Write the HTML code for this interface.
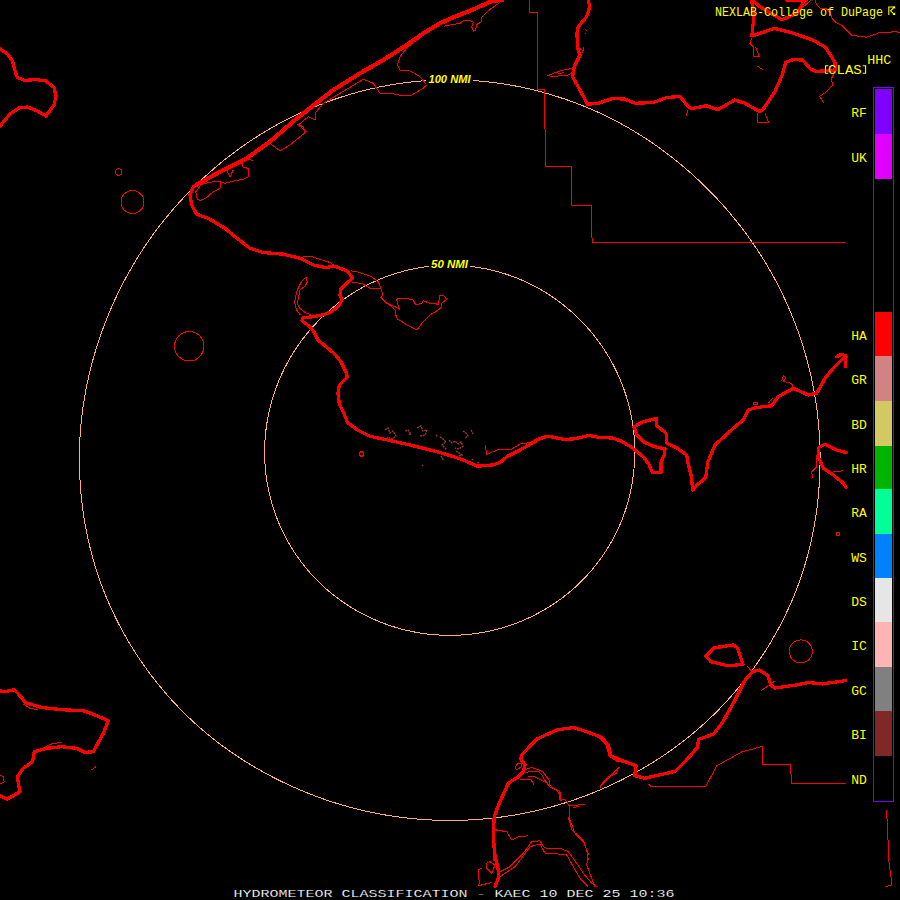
<!DOCTYPE html>
<html><head><meta charset="utf-8"><title>Hydrometeor Classification</title>
<style>html,body{margin:0;padding:0;background:#000;width:900px;height:900px;overflow:hidden}svg{display:block}</style>
</head><body>
<svg width="900" height="900" viewBox="0 0 900 900">
<style>.b{fill:none;stroke:#ff0000;stroke-width:4.2;stroke-linejoin:round;stroke-linecap:round;shape-rendering:crispEdges}.k{fill:none;stroke:#ff0000;stroke-width:3.3;stroke-linejoin:round;stroke-linecap:round;shape-rendering:crispEdges}.s{fill:none;stroke:#ff0000;stroke-width:1;stroke-linejoin:round;shape-rendering:crispEdges}.r{fill:none;stroke:#ffac80;stroke-width:1;shape-rendering:crispEdges}</style>
<polygon class="r" points="820.00,450.25 820.08,456.71 820.06,463.18 819.93,469.65 819.70,476.12 819.36,482.59 818.91,489.05 818.36,495.51 817.69,501.96 816.91,508.40 816.02,514.83 815.01,521.25 813.89,527.65 812.65,534.03 811.30,540.39 809.83,546.73 808.24,553.05 806.53,559.33 804.71,565.58 802.76,571.80 800.69,577.98 798.51,584.13 796.20,590.23 793.78,596.28 791.23,602.29 788.58,608.25 785.81,614.16 782.94,620.02 779.95,625.82 776.85,631.57 773.65,637.26 770.35,642.88 766.94,648.45 763.43,653.95 759.82,659.39 756.10,664.76 752.30,670.06 748.39,675.29 744.40,680.45 740.31,685.54 736.13,690.55 731.86,695.48 727.50,700.34 723.06,705.11 718.53,709.81 713.93,714.43 709.23,718.95 704.46,723.39 699.60,727.74 694.66,731.99 689.65,736.15 684.56,740.21 679.40,744.18 674.16,748.06 668.87,751.84 663.50,755.52 658.07,759.10 652.59,762.59 647.04,765.98 641.44,769.27 635.78,772.46 630.07,775.56 624.31,778.55 618.51,781.45 612.65,784.25 606.76,786.96 600.82,789.56 594.84,792.07 588.83,794.48 582.77,796.78 576.68,798.98 570.55,801.08 564.39,803.06 558.19,804.95 551.97,806.72 545.71,808.39 539.43,809.95 533.13,811.40 526.80,812.74 520.45,813.98 514.08,815.11 507.70,816.13 501.30,817.04 494.88,817.84 488.46,818.54 482.02,819.13 475.58,819.61 469.13,819.98 462.67,820.24 456.21,820.40 449.75,820.45 443.29,820.39 436.83,820.22 430.37,819.95 423.92,819.57 417.48,819.08 411.05,818.48 404.62,817.77 398.21,816.95 391.82,816.03 385.44,815.00 379.07,813.86 372.73,812.61 366.40,811.26 360.10,809.80 353.83,808.23 347.58,806.55 341.36,804.77 335.17,802.89 329.01,800.90 322.89,798.80 316.80,796.60 310.75,794.29 304.73,791.89 298.76,789.38 292.82,786.78 286.93,784.09 281.07,781.29 275.27,778.40 269.51,775.42 263.79,772.33 258.13,769.15 252.53,765.87 246.97,762.50 241.48,759.02 236.05,755.45 230.68,751.78 225.37,748.01 220.13,744.15 214.96,740.19 209.87,736.13 204.85,731.98 199.91,727.73 195.05,723.39 190.27,718.95 185.57,714.43 180.97,709.81 176.44,705.11 172.01,700.33 167.66,695.47 163.39,690.53 159.22,685.52 155.14,680.42 151.15,675.26 147.26,670.02 143.46,664.71 139.76,659.34 136.17,653.89 132.67,648.39 129.27,642.81 125.98,637.18 122.79,631.49 119.70,625.74 116.72,619.93 113.86,614.08 111.10,608.17 108.45,602.21 105.91,596.20 103.48,590.15 101.17,584.06 98.99,577.92 96.91,571.74 94.96,565.53 93.12,559.28 91.41,553.00 89.80,546.70 88.32,540.36 86.95,534.01 85.70,527.63 84.57,521.23 83.55,514.82 82.64,508.39 81.85,501.96 81.17,495.51 80.60,489.05 80.14,482.59 79.80,476.12 79.56,469.65 79.43,463.18 79.41,456.71 79.50,450.25 79.70,443.79 80.01,437.34 80.45,430.90 80.99,424.46 81.65,418.05 82.43,411.64 83.31,405.26 84.31,398.89 85.41,392.54 86.63,386.22 87.95,379.92 89.38,373.65 90.91,367.41 92.55,361.19 94.29,355.01 96.13,348.85 98.08,342.73 100.12,336.65 102.26,330.60 104.50,324.59 106.83,318.61 109.25,312.68 111.77,306.79 114.39,300.94 117.10,295.13 119.90,289.37 122.80,283.66 125.79,278.00 128.88,272.39 132.06,266.83 135.33,261.32 138.68,255.87 142.13,250.48 145.67,245.15 149.30,239.87 153.01,234.66 156.82,229.51 160.70,224.42 164.68,219.40 168.73,214.45 172.87,209.56 177.09,204.75 181.40,200.01 185.78,195.34 190.24,190.74 194.78,186.22 199.39,181.77 204.07,177.40 208.83,173.10 213.65,168.88 218.54,164.74 223.51,160.67 228.54,156.70 233.64,152.80 238.81,148.99 244.04,145.27 249.34,141.64 254.70,138.10 260.12,134.66 265.61,131.30 271.15,128.05 276.75,124.89 282.41,121.83 288.13,118.87 293.89,116.01 299.71,113.26 305.59,110.62 311.51,108.08 317.47,105.65 323.47,103.31 329.52,101.08 335.61,98.95 341.73,96.93 347.89,95.01 354.08,93.20 360.30,91.50 366.56,89.92 372.84,88.44 379.16,87.07 385.49,85.82 391.85,84.68 398.23,83.66 404.63,82.75 411.04,81.96 417.47,81.29 423.91,80.74 430.36,80.31 436.82,80.00 443.28,79.82 449.75,79.75 456.22,79.81 462.68,79.99 469.14,80.28 475.59,80.70 482.03,81.24 488.46,81.90 494.88,82.68 501.28,83.58 507.67,84.59 514.03,85.72 520.37,86.96 526.68,88.31 532.97,89.78 539.23,91.36 545.46,93.05 551.66,94.86 557.82,96.76 563.95,98.78 570.04,100.90 576.09,103.13 582.10,105.46 588.07,107.90 593.99,110.44 599.87,113.08 605.69,115.83 611.46,118.69 617.18,121.66 622.84,124.72 628.44,127.89 633.98,131.15 639.46,134.52 644.88,137.97 650.24,141.52 655.53,145.16 660.76,148.89 665.93,152.71 671.03,156.61 676.06,160.59 681.02,164.66 685.91,168.80 690.73,173.03 695.49,177.33 700.17,181.70 704.79,186.15 709.33,190.67 713.80,195.26 718.19,199.92 722.51,204.66 726.74,209.46 730.90,214.34 734.97,219.28 738.97,224.29 742.88,229.36 746.70,234.50 750.44,239.70 754.09,244.97 757.65,250.29 761.13,255.68 764.51,261.12 767.80,266.62 771.00,272.18 774.11,277.79 777.12,283.45 780.03,289.16 782.85,294.92 785.57,300.73 788.19,306.59 790.71,312.49 793.13,318.44 795.46,324.42 797.68,330.45 799.81,336.51 801.83,342.61 803.75,348.74 805.57,354.91 807.29,361.11 808.90,367.33 810.40,373.59 811.80,379.87 813.09,386.18 814.28,392.51 815.35,398.87 816.32,405.24 817.18,411.63 817.93,418.04 818.57,424.46 819.09,430.89 819.51,437.34 819.81,443.79"/>
<polygon class="r" points="634.75,450.30 634.75,453.53 634.69,456.76 634.58,459.99 634.42,463.22 634.20,466.44 633.92,469.66 633.59,472.88 633.21,476.09 632.77,479.29 632.27,482.49 631.71,485.68 631.10,488.86 630.44,492.03 629.71,495.18 628.93,498.33 628.10,501.45 627.21,504.57 626.26,507.67 625.25,510.75 624.19,513.81 623.08,516.85 621.91,519.88 620.68,522.88 619.40,525.86 618.07,528.81 616.68,531.74 615.24,534.65 613.75,537.53 612.20,540.38 610.61,543.20 608.97,546.00 607.27,548.76 605.53,551.50 603.74,554.20 601.90,556.87 600.01,559.51 598.08,562.11 596.10,564.68 594.07,567.21 592.01,569.71 589.89,572.17 587.74,574.59 585.54,576.97 583.30,579.32 581.02,581.62 578.70,583.89 576.34,586.11 573.94,588.29 571.50,590.42 569.03,592.51 566.52,594.56 563.97,596.56 561.38,598.51 558.77,600.42 556.12,602.28 553.44,604.09 550.72,605.86 547.98,607.58 545.21,609.25 542.41,610.87 539.58,612.44 536.72,613.97 533.84,615.44 530.94,616.87 528.01,618.24 525.06,619.57 522.09,620.84 519.10,622.06 516.08,623.23 513.05,624.35 510.00,625.42 506.93,626.43 503.84,627.39 500.74,628.29 497.62,629.15 494.49,629.94 491.35,630.68 488.19,631.37 485.02,632.01 481.84,632.59 478.65,633.11 475.46,633.58 472.25,633.99 469.04,634.35 465.83,634.65 462.61,634.90 459.38,635.09 456.16,635.23 452.93,635.31 449.70,635.34 446.47,635.31 443.24,635.23 440.02,635.09 436.79,634.89 433.57,634.64 430.36,634.34 427.15,633.98 423.94,633.56 420.75,633.09 417.56,632.56 414.38,631.98 411.22,631.35 408.06,630.66 404.92,629.91 401.79,629.11 398.67,628.26 395.57,627.35 392.48,626.39 389.41,625.38 386.36,624.32 383.33,623.20 380.32,622.03 377.33,620.80 374.35,619.53 371.40,618.21 368.48,616.83 365.57,615.41 362.69,613.94 359.84,612.42 357.01,610.85 354.21,609.23 351.43,607.56 348.69,605.84 345.98,604.08 343.29,602.27 340.64,600.41 338.02,598.50 335.44,596.55 332.89,594.55 330.37,592.51 327.90,590.42 325.46,588.28 323.06,586.11 320.70,583.89 318.38,581.62 316.10,579.32 313.86,576.97 311.66,574.59 309.51,572.17 307.40,569.71 305.33,567.21 303.31,564.67 301.33,562.10 299.40,559.50 297.52,556.86 295.68,554.19 293.89,551.48 292.15,548.75 290.46,545.98 288.82,543.19 287.22,540.36 285.68,537.51 284.19,534.63 282.75,531.72 281.37,528.79 280.04,525.84 278.76,522.86 277.53,519.86 276.36,516.84 275.24,513.80 274.18,510.74 273.17,507.66 272.22,504.56 271.33,501.45 270.49,498.32 269.71,495.18 268.99,492.02 268.32,488.85 267.70,485.68 267.15,482.49 266.64,479.29 266.20,476.09 265.81,472.88 265.48,469.66 265.20,466.44 264.98,463.22 264.81,459.99 264.70,456.76 264.65,453.53 264.65,450.30 264.71,447.07 264.82,443.84 264.99,440.62 265.22,437.40 265.50,434.18 265.84,430.98 266.24,427.77 266.69,424.58 267.20,421.39 267.76,418.22 268.38,415.05 269.05,411.90 269.78,408.76 270.56,405.63 271.39,402.52 272.28,399.42 273.22,396.34 274.21,393.28 275.25,390.23 276.34,387.20 277.49,384.19 278.68,381.20 279.93,378.24 281.22,375.29 282.57,372.37 283.96,369.47 285.41,366.59 286.90,363.74 288.44,360.91 290.03,358.12 291.67,355.35 293.35,352.60 295.08,349.89 296.86,347.21 298.68,344.56 300.55,341.94 302.46,339.35 304.42,336.80 306.42,334.28 308.47,331.79 310.55,329.34 312.68,326.93 314.85,324.55 317.06,322.21 319.31,319.91 321.60,317.65 323.93,315.42 326.29,313.24 328.69,311.10 331.13,308.99 333.60,306.93 336.11,304.92 338.66,302.94 341.23,301.01 343.84,299.12 346.49,297.28 349.16,295.49 351.87,293.74 354.61,292.04 357.37,290.38 360.17,288.78 362.99,287.22 365.84,285.71 368.72,284.26 371.62,282.85 374.55,281.50 377.50,280.20 380.47,278.95 383.46,277.75 386.48,276.61 389.52,275.51 392.57,274.47 395.64,273.49 398.73,272.55 401.84,271.67 404.96,270.85 408.09,270.08 411.24,269.36 414.40,268.70 417.57,268.10 420.76,267.55 423.95,267.06 427.15,266.63 430.36,266.25 433.57,265.93 436.79,265.67 440.01,265.46 443.24,265.32 446.47,265.23 449.70,265.20 452.93,265.23 456.16,265.31 459.39,265.46 462.61,265.66 465.83,265.92 469.05,266.24 472.25,266.61 475.45,267.05 478.65,267.53 481.83,268.08 485.00,268.68 488.16,269.34 491.31,270.05 494.45,270.82 497.57,271.64 500.68,272.52 503.77,273.45 506.84,274.44 509.90,275.48 512.93,276.57 515.95,277.72 518.95,278.91 521.92,280.16 524.87,281.46 527.80,282.82 530.70,284.22 533.58,285.68 536.43,287.19 539.25,288.75 542.05,290.35 544.81,292.01 547.55,293.71 550.25,295.46 552.93,297.26 555.57,299.10 558.18,300.99 560.76,302.92 563.30,304.90 565.81,306.92 568.28,308.98 570.72,311.08 573.12,313.23 575.49,315.41 577.81,317.63 580.10,319.90 582.36,322.20 584.57,324.53 586.74,326.91 588.87,329.32 590.96,331.77 593.01,334.25 595.01,336.77 596.97,339.32 598.89,341.91 600.76,344.52 602.59,347.17 604.37,349.85 606.11,352.56 607.80,355.31 609.44,358.07 611.03,360.87 612.58,363.70 614.08,366.55 615.52,369.42 616.92,372.32 618.27,375.25 619.56,378.20 620.81,381.17 622.00,384.16 623.15,387.17 624.24,390.20 625.28,393.25 626.27,396.32 627.20,399.40 628.08,402.50 628.91,405.62 629.68,408.75 630.40,411.89 631.07,415.05 631.68,418.21 632.24,421.39 632.74,424.58 633.19,427.77 633.58,430.97 633.91,434.18 634.19,437.40 634.42,440.62 634.58,443.84 634.70,447.07"/>
<polyline class="s" points="529.5,0 529.5,12.5 537.5,12.5 537.5,89.5 544.5,89.5 545.5,166.5 571.3,166.5 571.3,205.5 591.5,205.5 591.5,238 592.5,238 592.5,242.5 846,242.5"/>
<polyline class="s" points="648.6,783.9 651.4,786.7 705.6,786.7 716.7,765.8 741.7,751.9 762.5,746.4 762.5,764.4 790.3,764.4 791.7,783.3 846,783.3"/>
<polyline class="s" points="886.6,810 888,840 889,862 891,877 891,885 885,887"/>
<polyline class="s" points="196.7,198.3 195.8,191.7 201.7,184.2 213.3,181.7 220,181.7 220,188.3 213.3,191.7 206.7,197.5 200,200.8 196.7,198.3"/>
<polyline class="s" points="220,181.7 225,183.3 235,180.8 243.3,179.2 248.3,176.7 248.3,168.3 243.3,167.5 241.7,162.5 248.3,159.2 253.3,160.8"/>
<polyline class="s" points="226.7,170 230,176.7 233.3,170"/>
<polyline class="s" points="270,143.3 280,150.8 290,145 300,136.7 306.7,131.7 298.3,125 308.3,116.7 315,120 315,113.3 323.3,103.3 340,93.3 356.7,83.3 363.3,79.2 373.3,83.3 380,93.3 390,93.3 403.3,95.8 411.7,95 423.3,88.3 426.7,85 420,76.7 410,70.8 400,70 397.5,65 400,56.7 406.7,48.3 413.3,42.5 420,38"/>
<polyline class="s" points="444.4,26.1 460,23.3 463.3,20.6 470,20.6 473.3,22.2 471.7,26.7 473.3,31.1 475.6,30 476.7,24.4 481.1,22.2 481.1,17.8 486.7,12.2 492.2,7.8 498.9,3.3 502.2,0"/>
<polyline class="s" points="350.8,270.8 356.7,271.7 370,275.8 378.3,281.7 380.8,288.3 383,295 380.8,297.5 386.7,303.3 391,306 395,310 395,313 397.5,319 403.3,322.5 408.3,325.8 416.7,330 423.3,321.7 430,315 436.7,310.8 440.8,308.3 441.7,303.3 446.7,299.2 443.3,295 440,295 438.3,304.2 430,303.3 423.3,300.8 421.7,303.3 415.8,305 413.3,300 406.7,298.3 398.3,298.3 396.7,300 399.2,309.2 395,306.7 386.7,303.3"/>
<polyline class="s" points="351.7,282.5 361.7,283.3 370,288.3 380,289"/>
<polyline class="s" points="300.7,315.3 296.7,310 294.7,303.3 295.3,298 297.3,290 301.3,282 306,277.3 307.3,282 305.3,286 300,290 298.7,296.7 297.3,303.3 300,308.7 305.3,312.7 312,315.3"/>
<polyline class="s" points="300,257.5 310,256 330,262.5 335,266"/>
<polyline class="s" points="486,455 492,452 500,449 512,449 520,444 530,442.5 540,437"/>
<polyline class="s" points="485,445 487,455"/>
<polyline class="s" points="751.8,37.8 749.9,43.4 753.7,47.2 753.7,56.7 759.3,56.7 755.6,47.2"/>
<polyline class="s" points="757.4,66.1 763.1,69.9"/>
<polyline class="s" points="834.9,71.8 831.1,79.3 833,85 825.4,92.6 819.8,96.3 823.6,102.9"/>
<polyline class="s" points="757.4,113.3 757.4,122.8 768.8,122.8 765,113.3"/>
<polyline class="s" points="687.6,109.6 686.6,116.2"/>
<polyline class="s" points="815,0 816.7,4.4 821.1,8.9 825.6,8.3 830,12.2 832.2,18.9 835.6,22.2 842.2,25.6 852.2,35.6 857.8,36.1 866.7,37.2 871.1,35.6 877.8,33.3 880,32.2 888.9,32.8 894.4,31.1 898.9,32.4 900,32.4"/>
<polyline class="s" points="802,8 811,0"/>
<polyline class="s" points="518,763 515,768 517,770 521,767 521,763 518,763"/>
<polyline class="s" points="525,770 531,767.5 538,769.5 543,772 546,776 549,780 549,784 553,788 559,791 561,794 560,801 564,799 567,802 569,806 570,820 575,833.3 583.3,841.7 588.3,853.3 586.7,865 591.7,878.3 595,886.7"/>
<polyline class="s" points="526,773 530,771 538,771 542,775 544,779 547,783 550,787 556,790 559.5,794 559.5,800"/>
<polyline class="s" points="520,780 526,779 531,780 534,784.5"/>
<polyline class="s" points="528,776 535,777 541,780 545,782 548,783"/>
<polyline class="s" points="573,808 579,806"/>
<polyline class="s" points="568.3,816.7 571.7,830 583.3,840 586.7,850 588.3,860"/>
<polyline class="s" points="569,805 575,806 581,804 585,804.5"/>
<polyline class="s" points="618.3,768.3 616.7,773.3 608.3,776.7 603.3,781.7 600,788.3"/>
<polyline class="s" points="491.7,829.2 506.7,831.7 511.7,840 518.3,836.7 528.3,835.8"/>
<polyline class="s" points="500,871.7 510,866.7 523.3,853.3 531.7,841.7 540,840.8 543.3,846.7 546.7,848.3 560,848.3 568.3,851.7 576.7,863.3 583.3,873.3 591.7,883.3 596.7,886.7"/>
<polyline class="s" points="500,876.7 515,866.7 530,846.7 540,844 545,853.3 551.7,853.3 566.7,855 573.3,866.7 580,878.3 588.3,886.7"/>
<polyline class="s" points="486.7,863.3 490,861.7 495,865 491.7,873.3 486.7,868.3 486.7,863.3"/>
<polyline class="s" points="481.7,868.3 478.3,870 478.3,878.3 480,882 478.3,885.8 491.7,882.5"/>
<polyline class="s" points="0,775 3.3,776.7 4.2,781.7 0,784.2"/>
<polyline class="s" points="23.3,704 30,708.3 37.5,709.7"/>
<polyline class="s" points="45,746.7 53.3,743.3 62.5,742.5"/>
<polyline class="s" points="91.7,770 95.8,766.7"/>
<polyline class="s" points="781.7,380.8 783.3,375.8 785.8,377.5 783.5,381.5 791.7,383.3 793,388"/>
<polyline class="s" points="753,404.5 754,402.5 757,402.5 757.5,404.5 753,404.5"/>
<polyline class="s" points="768.3,403.3 773.3,397.5"/>
<polyline class="s" points="816.7,455 816.7,466.7 811.7,471.7 812.5,478.3"/>
<polyline class="s" points="833.3,471.7 843.3,470.8"/>
<polyline class="s" points="547.5,75.8 553,73.5 560,71 566,69.5 572.5,68.3 573,72 568,75 561,75.5 555,76.5 547.5,75.8"/>
<polyline class="s" points="556,72 560,74 564,72"/>
<polyline class="s" points="600,786.7 611,775.6 619.4,767"/>
<polyline class="s" points="761,690.8 775,681"/>
<polyline class="s" points="747,665.8 752,672"/>
<polyline class="s" points="296.7,124.2 303.3,126.7 305,133.3"/>
<polyline class="s" points="585.5,29 586.5,31"/>
<polyline class="s" points="585,33 585.5,34.5"/>
<polyline class="s" points="579,48 582,50 583,53"/>
<polyline class="s" points="583.5,51 584,47"/>
<circle class="s" cx="132.5" cy="202" r="11.5"/>
<circle class="s" cx="118.75" cy="172" r="3.2"/>
<circle class="s" cx="189.25" cy="346.25" r="14.75"/>
<circle class="s" cx="800.8" cy="651.4" r="11.5"/>
<circle class="s" cx="361.5" cy="454" r="2.2"/>
<circle class="s" cx="837.8" cy="534.2" r="1.8"/>
<polyline points="385,430 388,428 390,433 393,431 396,436 392,439 387,437" fill="none" stroke="#a83a3a" stroke-width="1.3" stroke-dasharray="2 0.8"/>
<polyline points="405,431 408,430 411,434 408,435" fill="none" stroke="#a83a3a" stroke-width="1.3" stroke-dasharray="2 0.8"/>
<polyline points="417,428 421,426 423,431 427,430 425,435 420,436" fill="none" stroke="#a83a3a" stroke-width="1.3" stroke-dasharray="2 0.8"/>
<polyline points="436,435 438,437" fill="none" stroke="#a83a3a" stroke-width="1.3" stroke-dasharray="2 0.8"/>
<polyline points="440,437 443,439 446,442 442,445 445,448 447,450" fill="none" stroke="#a83a3a" stroke-width="1.3" stroke-dasharray="2 0.8"/>
<polyline points="449,440 452,443 455,441 458,444 461,442 463,446 459,449 455,448" fill="none" stroke="#a83a3a" stroke-width="1.3" stroke-dasharray="2 0.8"/>
<polyline points="456,451 459,453 462,455 458,456" fill="none" stroke="#a83a3a" stroke-width="1.3" stroke-dasharray="2 0.8"/>
<polyline points="463,431 466,433 468,436 465,438" fill="none" stroke="#a83a3a" stroke-width="1.3" stroke-dasharray="2 0.8"/>
<polyline points="471,430 473,434" fill="none" stroke="#a83a3a" stroke-width="1.3" stroke-dasharray="2 0.8"/>
<polyline points="441,456 444,461" fill="none" stroke="#a83a3a" stroke-width="1.3" stroke-dasharray="2 0.8"/>
<polyline points="452,455 457,457" fill="none" stroke="#a83a3a" stroke-width="1.3" stroke-dasharray="2 0.8"/>
<polyline points="472,459 473,460" fill="none" stroke="#a83a3a" stroke-width="1.3" stroke-dasharray="2 0.8"/>
<polyline points="477,463 480,462" fill="none" stroke="#a83a3a" stroke-width="1.3" stroke-dasharray="2 0.8"/>
<polyline points="422,465 423,466" fill="none" stroke="#a83a3a" stroke-width="1.3" stroke-dasharray="2 0.8"/>
<polyline class="k" points="0,49 7.5,54 12.5,61 15.5,72.5 17.5,77.5 25,80.5 35,79.5 46,81 54,87.5 56,96 54,105 46,116 37.5,111 27.5,107 19,108 10,114 0,126"/>
<polyline class="b" points="502,0 492,1 474.4,8.9 452.2,17.8 440,23.3 423.3,33.3 406.7,45 383.3,60 360,73.3 333.3,90 311.7,106.7 295,120 270,141.7 246.7,158.3 223.3,170 205,180 196,185"/>
<polyline class="k" points="205,180 193.3,186.7 190,195 191.7,205 196.7,214.2 208.3,218.3 225,228.3 235,236.7 250,248.3 263.3,252.5 283.3,254.2 300,258.3 313.3,265 325,267.5 335,266.25 347.5,271.25 352.5,278 340.7,289.3 340,295.3 342,299.3 338.7,306 332,311.3 324,314.7 313.3,316.7 302.7,318 302,320.7 310,326.7 314,332 318,340 326,346.7 334,353.3 340.7,361.3 346,372 347.3,377.3 339.3,385.3 338,393.3 339.3,404 343.3,412 347.5,422.5 357.5,430 370,436.25 387.5,440 410,445 440,452.5 460,458.75 477.5,466.25 492.5,465 500,462.5 507.5,456.25 520,450 540,438.75 547.5,436.25 565,439.5 575,438.75 588.75,435.5 600,437.5 612.5,438 621.1,441.1 632.2,447.8 643.3,456.7 648.9,464.4 652.2,472.2 661.1,472.2 661.1,462.2 664.4,454.4 665,448.9 654.4,446.7 644.4,442.2 636.7,434.4 633.9,426.7 643.3,421.7 656.7,418.3 656.7,425.6 664.4,431.7 666.7,434.4 666.7,443.3 676.7,447.8 686.7,455 687.8,462.2 691.1,475.6 692.8,490 697.8,484.4 705.6,477.8 707.8,462.2 715,445 733.3,428.3 743.3,420 748.3,410 756.7,407.5 771.7,405.8 778.3,396.7 793.3,388.3 808.3,395 816.7,393.3 825,378.3 833.3,368.3 843.3,358.3 846,357"/>
<polyline class="k" points="836.7,356.7 841.7,354.2 845.8,355.8 845.8,366.7"/>
<polyline class="k" points="846,452.5 836.7,450 825,444.2 820,446.7 818.3,448.3 818.3,456.7 823.3,468.3 833.3,475 843.3,483.3 846,487"/>
<polyline class="k" points="751.8,0 761.2,7.6 782,19.8 797.1,13.2 804.7,0"/>
<polyline class="k" points="787,0.5 806,0.5"/>
<polyline class="k" points="751.8,0 753.7,18.9 751.8,35.9 755.6,34.9 774.4,28.3 789.6,32.1 812.2,39.7 825.4,47.2 834.9,62.3 835.8,69.9 825.4,70.8 816,71.4 810.3,68.9 802.8,60.1 793.3,59.5 785.8,62.3 782,75.6 774.4,92.6 763.1,109.6 759.3,111.4 744.2,102.9 734.8,100.1 717.8,109.6 706.4,105.8 691.3,108.6 687.6,105.8 680,96.5 666.7,97.5 653.3,102.5 635,103.3 625,99.2 613.3,98.3 598.3,103.3 587.5,104.2 580,90 572.5,76.7 574.2,66.7 580,55 577.5,48.3 577,33.3 578.3,26.7 586.7,16.7 589.7,6.7 588.3,0"/>
<polyline class="k" points="0,690.8 5,691.7 14.2,689.7 21.7,697.5 25,702.5 41.7,707.5 61.7,709.7 83.3,710.8 93.3,714.2 108.3,720.8 103.3,733.3 93.3,751.7 85,752.5 76.7,748.3 61.7,746.7 46.7,748.3 34.2,751.7 32.5,761.7 23.3,768.3 17.5,776.7 18.3,783.3 20,791.7 11.7,796.7 6.7,799.2 0,795.8"/>
<polyline class="k" points="495,860 493.3,835 494.2,816.7 499.2,803.3 508.3,783.3 518.3,776.7 523.3,771.7 525,765 520.8,759.2 521.7,755 536.7,739.2 556.7,730 573.3,727.5 586.7,731.7 601.7,737.5 606.7,743.3 610,755 616.7,760 625,761.7 636.1,765.8 634.7,775.6 644.4,778.3 675,771.4 686.1,760.3 697.2,747.8 698.6,739.4 713.9,733.9 722.2,722.8 733.3,703.3 744.4,681.1 752.8,671.4 759.7,670 768,675.6 770.8,685.3 775,688 794.4,685.3 808.3,682.5 822.2,683.9 845.8,680.6"/>
<polyline class="k" points="600,736.7 608.3,745 611.1,756.1 625,761.7"/>
<polyline class="k" points="495,855 498.3,870 498.3,878.3 495,886.7"/>
<polyline class="k" points="705.6,656.1 713.9,647.8 733.3,645 737.5,647.8 743,664.4 727.8,665.8 711,661.7 705.6,656.1"/>
<rect x="426" y="73" width="47" height="12" fill="#000"/>
<text x="428.5" y="83" font-family="Liberation Sans" font-style="italic" font-weight="bold" font-size="11" fill="#ffff00" textLength="42" lengthAdjust="spacingAndGlyphs">100 NMI</text>
<rect x="429" y="258" width="41" height="12" fill="#000"/>
<text x="431" y="268" font-family="Liberation Sans" font-style="italic" font-weight="bold" font-size="11" fill="#ffff00" textLength="37" lengthAdjust="spacingAndGlyphs">50 NMI</text>
<rect x="873.5" y="87.5" width="20" height="714" fill="none" stroke="#7f00ff" stroke-width="1"/>
<rect x="875" y="89" width="17" height="45" fill="#7f00ff"/>
<text x="851.2" y="117.2" font-family="Liberation Mono" font-size="13.5" fill="#ffff00" textLength="15.6" lengthAdjust="spacingAndGlyphs">RF</text>
<rect x="875" y="134" width="17" height="45" fill="#e100ff"/>
<text x="851.2" y="162.2" font-family="Liberation Mono" font-size="13.5" fill="#ffff00" textLength="15.6" lengthAdjust="spacingAndGlyphs">UK</text>
<rect x="875" y="312" width="17" height="44" fill="#ff0000"/>
<text x="851.2" y="339.7" font-family="Liberation Mono" font-size="13.5" fill="#ffff00" textLength="15.6" lengthAdjust="spacingAndGlyphs">HA</text>
<rect x="875" y="356" width="17" height="45" fill="#d28282"/>
<text x="851.2" y="384.2" font-family="Liberation Mono" font-size="13.5" fill="#ffff00" textLength="15.6" lengthAdjust="spacingAndGlyphs">GR</text>
<rect x="875" y="401" width="17" height="45" fill="#d2c864"/>
<text x="851.2" y="429.2" font-family="Liberation Mono" font-size="13.5" fill="#ffff00" textLength="15.6" lengthAdjust="spacingAndGlyphs">BD</text>
<rect x="875" y="446" width="17" height="43" fill="#00b400"/>
<text x="851.2" y="473.2" font-family="Liberation Mono" font-size="13.5" fill="#ffff00" textLength="15.6" lengthAdjust="spacingAndGlyphs">HR</text>
<rect x="875" y="489" width="17" height="45" fill="#00ff96"/>
<text x="851.2" y="517.2" font-family="Liberation Mono" font-size="13.5" fill="#ffff00" textLength="15.6" lengthAdjust="spacingAndGlyphs">RA</text>
<rect x="875" y="534" width="17" height="44" fill="#0082ff"/>
<text x="851.2" y="561.7" font-family="Liberation Mono" font-size="13.5" fill="#ffff00" textLength="15.6" lengthAdjust="spacingAndGlyphs">WS</text>
<rect x="875" y="578" width="17" height="44" fill="#e6e6e6"/>
<text x="851.2" y="605.7" font-family="Liberation Mono" font-size="13.5" fill="#ffff00" textLength="15.6" lengthAdjust="spacingAndGlyphs">DS</text>
<rect x="875" y="622" width="17" height="45" fill="#ffb4b4"/>
<text x="851.2" y="650.2" font-family="Liberation Mono" font-size="13.5" fill="#ffff00" textLength="15.6" lengthAdjust="spacingAndGlyphs">IC</text>
<rect x="875" y="667" width="17" height="44" fill="#808080"/>
<text x="851.2" y="694.7" font-family="Liberation Mono" font-size="13.5" fill="#ffff00" textLength="15.6" lengthAdjust="spacingAndGlyphs">GC</text>
<rect x="875" y="711" width="17" height="45" fill="#802828"/>
<text x="851.2" y="739.2" font-family="Liberation Mono" font-size="13.5" fill="#ffff00" textLength="15.6" lengthAdjust="spacingAndGlyphs">BI</text>
<text x="851.2" y="784.2" font-family="Liberation Mono" font-size="13.5" fill="#ffff00" textLength="15.6" lengthAdjust="spacingAndGlyphs">ND</text>
<text x="715.0" y="15.8" font-family="Liberation Mono" font-size="12" fill="#ffff00" textLength="168" lengthAdjust="spacingAndGlyphs" >NEXLAB-College of DuPage</text>
<text x="867.2" y="64" font-family="Liberation Mono" font-size="13.5" fill="#ffff00" textLength="24" lengthAdjust="spacingAndGlyphs" >HHC</text>
<text x="828.1" y="73.8" font-family="Liberation Mono" font-size="13.5" fill="#ffff00" textLength="33.6" lengthAdjust="spacingAndGlyphs" >CLAS</text>
<path d="M828.3,65.7 H825.5 V73.3 H828.3 M862.8,65.7 H865.6 V73.3 H862.8" fill="none" stroke="#ffff00" stroke-width="1.1"/>
<path d="M888.8,15 V7 H894.5 M894.3,7.2 L890.6,10.8 L894.3,14.4" fill="none" stroke="#ffff00" stroke-width="1.1"/>
<path d="M892.6,6.5 H895.2 V9 Z M895.2,15 H892.4 L895.2,12.2 Z" fill="#ffff00"/>
<text x="233.6" y="897.2" font-family="Liberation Mono" font-size="11.6" fill="#ffffff" textLength="441" lengthAdjust="spacingAndGlyphs" stroke="#000" stroke-width="0.15" paint-order="fill">HYDROMETEOR CLASSIFICATION - KAEC 10 DEC 25 10:36</text>
</svg>
</body></html>
